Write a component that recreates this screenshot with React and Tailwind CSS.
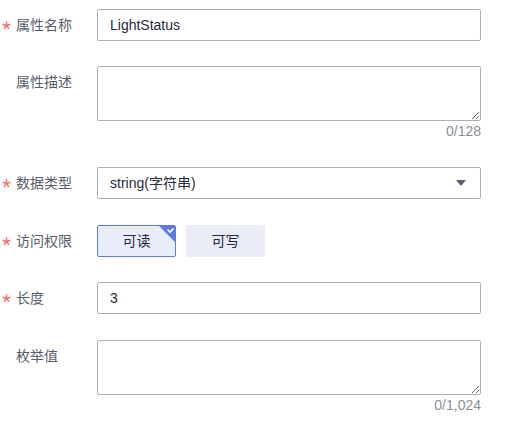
import React from "react";

const font = { fontFamily: '"Liberation Sans", "Noto Sans CJK SC", sans-serif' };

const inputClass =
  "w-full h-8 border border-[#adb0b8] rounded-[2px] px-3 text-sm text-[#252b3a] bg-white flex items-center";

// five-armed required marker
const Star = () => (
  <svg width="9" height="9" viewBox="-5 -5 10 10" className="ml-[2px]">
    {[0, 72, 144, 216, 288].map((a) => (
      <line
        key={a}
        x1="0"
        y1="0"
        x2="0"
        y2="-4.6"
        stroke="#f66f6a"
        strokeWidth="1.7"
        transform={`rotate(${a})`}
      />
    ))}
  </svg>
);

const Label = ({ required, children }) => (
  <div className="w-[97px] shrink-0 flex items-center h-8 text-sm text-[#575d6c]">
    <span className="w-4 flex items-center">{required ? <Star /> : null}</span>
    <span>{children}</span>
  </div>
);

const TextArea = ({ max }) => (
  <div className="w-[384px]">
    <textarea className="block w-full h-[55px] border border-[#adb0b8] rounded-[2px] px-3 py-1 text-sm outline-none" />
    <div className="text-right text-sm leading-5 text-[#8a8e99]">0/{max}</div>
  </div>
);

const App = () => {
  return (
    <div className="w-[506px] h-[429px] bg-white pt-[9px]" style={font}>
      <div className="flex">
        <Label required>属性名称</Label>
        <div className="w-[384px]">
          <div className={inputClass}>LightStatus</div>
        </div>
      </div>

      <div className="flex mt-[25px]">
        <Label>属性描述</Label>
        <TextArea max="128" />
      </div>

      <div className="flex mt-[26px]">
        <Label required>数据类型</Label>
        <div className="w-[384px]">
          <div className={inputClass + " justify-between"}>
            <span>string(字符串)</span>
            <svg width="10" height="6" viewBox="0 0 10 6" className="mr-[2px]">
              <path d="M0 0 L10 0 L5 6 Z" fill="#575d6c" />
            </svg>
          </div>
        </div>
      </div>

      <div className="flex mt-[26px]">
        <Label required>访问权限</Label>
        <div className="flex gap-[10px]">
          <div className="relative w-[79px] h-8 border border-[#5e7ce0] bg-[#e9edfa] rounded-[2px] flex items-center justify-center text-sm text-[#252b3a] overflow-hidden">
            可读
            <svg width="18" height="18" viewBox="0 0 18 18" className="absolute -top-px -right-px">
              <path d="M0 0 L18 0 L18 18 Z" fill="#5e7ce0" />
              <path d="M9.5 4.5 L12 7 L15.5 3.5" stroke="white" strokeWidth="1.6" fill="none" />
            </svg>
          </div>
          <div className="w-[79px] h-8 bg-[#e9ecf7] rounded-[2px] flex items-center justify-center text-sm text-[#252b3a]">
            可写
          </div>
        </div>
      </div>

      <div className="flex mt-[25px]">
        <Label required>长度</Label>
        <div className="w-[384px]">
          <div className={inputClass}>3</div>
        </div>
      </div>

      <div className="flex mt-[26px]">
        <Label>枚举值</Label>
        <TextArea max="1,024" />
      </div>
    </div>
  );
};

export default App;
